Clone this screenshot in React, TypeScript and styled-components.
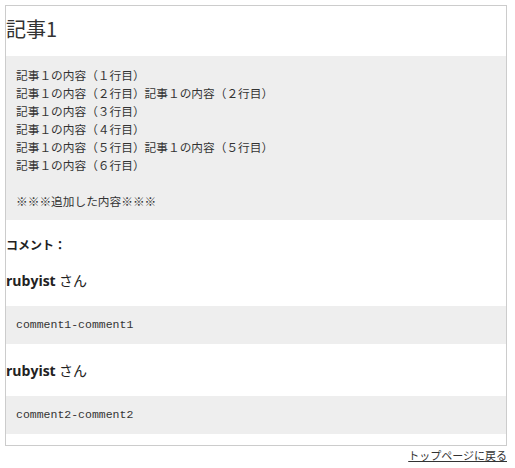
import React from 'react';
import styled, { createGlobalStyle } from 'styled-components';

const GlobalStyle = createGlobalStyle`
  body {
    margin: 5px;
    background: #fff;
    color: #333;
    font-family: "Noto Sans CJK JP", "DejaVu Sans", sans-serif;
  }
`;

const lines = [
  '記事１の内容（１行目）',
  '記事１の内容（２行目）記事１の内容（２行目）',
  '記事１の内容（３行目）',
  '記事１の内容（４行目）',
  '記事１の内容（５行目）記事１の内容（５行目）',
  '記事１の内容（６行目）',
  '',
  '※※※追加した内容※※※'
];

const comments = [
  { name: 'rubyist', body: 'comment1-comment1' },
  { name: 'rubyist', body: 'comment2-comment2' }
];

const App = () => {
  return (
    <>
      <GlobalStyle />
      <Page>
        <Article>
          <Title>記事1</Title>
          <Content>
            {lines.map((line, i) => (
              <Line key={i}>{line || '\u00a0'}</Line>
            ))}
          </Content>
          <CommentHeading>コメント：</CommentHeading>
          {comments.map((c, i) => (
            <div key={i}>
              <Author>
                <b>{c.name}</b> <San>さん</San>
              </Author>
              <CommentBody>{c.body}</CommentBody>
            </div>
          ))}
        </Article>
        <Footer>
          <BackLink href="#">トップページに戻る</BackLink>
        </Footer>
      </Page>
    </>
  );
};

const Page = styled.div`
  width: 502px;
`;

const Article = styled.div`
  border: 1px solid #ccc;
  padding-bottom: 11px;
`;

const Title = styled.h1`
  margin: 0;
  padding: 11px 0 15px;
  font-size: 20px;
  line-height: 24px;
  font-weight: normal;
  color: #333;
`;

const Content = styled.div`
  background: #eee;
  padding: 10px;
  font-size: 11.7px;
  line-height: 18px;
`;

const Line = styled.div`
  white-space: pre;
`;

const CommentHeading = styled.h3`
  margin: 16px 0 0;
  font-size: 12px;
  line-height: 18px;
  font-weight: bold;
  color: #222;
`;

const Author = styled.h4`
  margin: 16px 0 15px;
  font-size: 14px;
  line-height: 20px;
  color: #222;

  & > b {
    font-family: "Open Sans", "DejaVu Sans", sans-serif;
    font-weight: bold;
  }
`;

const San = styled.span`
  font-weight: normal;
  font-size: 14px;
`;

const CommentBody = styled.div`
  background: #eee;
  padding: 10px;
  font-family: "Liberation Mono", monospace;
  font-size: 11.5px;
  line-height: 18px;
  color: #333;
`;

const Footer = styled.div`
  text-align: right;
  font-size: 11px;
  line-height: 16px;
  padding-top: 1px;
`;

const BackLink = styled.a`
  color: #333;
  text-decoration: underline;
`;

export default App;
